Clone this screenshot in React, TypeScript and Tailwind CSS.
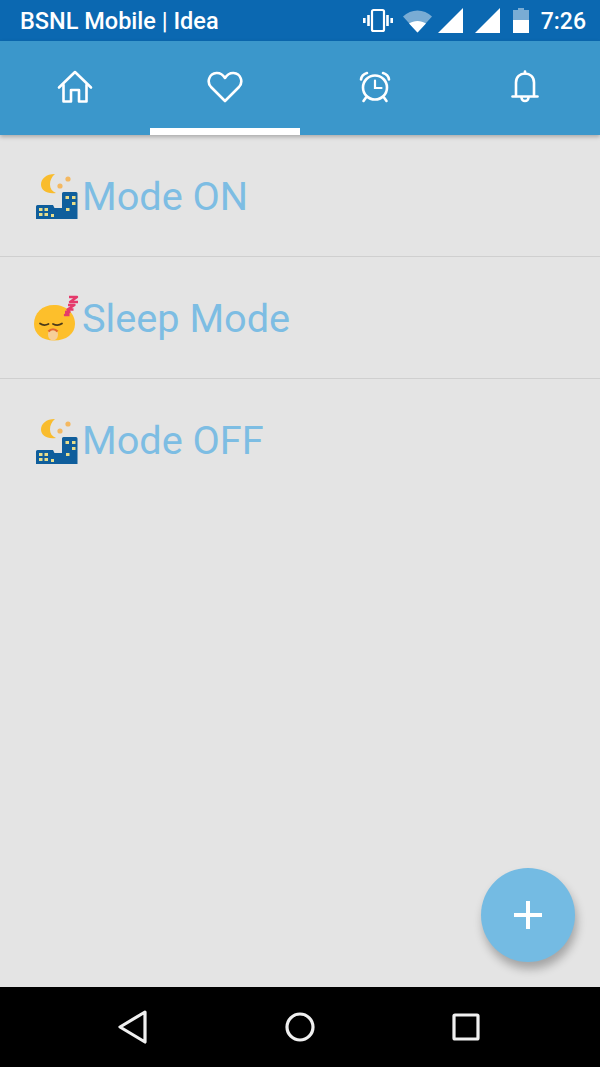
import React from "react";

function HomeIcon() {
  return (
    <svg width="36" height="34" viewBox="0 0 36 34" fill="none" stroke="white" strokeWidth="2.600" strokeLinejoin="round" strokeLinecap="round">
      <path d="M2 17.500 18 2l16 15.500" />
      <path d="M6.500 15v16.500h7.500V20h8v11.500h7.500V15" />
    </svg>
  );
}

function HeartIcon() {
  return (
    <svg width="36" height="32" viewBox="0 0 36 32" fill="none" stroke="white" strokeWidth="2.600" strokeLinejoin="round">
      <path d="M18 30 4 16C-.5 11 2 2.500 9.500 2c4-.2 6.500 1.800 8.500 5 2-3.200 4.500-5.200 8.500-5C34 2.500 36.500 11 32 16z" />
    </svg>
  );
}

function AlarmIcon() {
  return (
    <svg width="32" height="32" viewBox="0 0 32 32" fill="none" stroke="white" strokeWidth="2.600" strokeLinecap="round">
      <circle cx="16" cy="16.500" r="12" />
      <path d="M16 9.500V17h6.500" strokeWidth="2.200" />
      <path d="M2 8.500C2.500 5 4.500 3 8 2M30 8.500C29.500 5 27.500 3 24 2M7 26.500 4.500 30M25 26.500l2.500 3.500" />
    </svg>
  );
}

function BellIcon() {
  return (
    <svg width="28" height="34" viewBox="0 0 28 34" fill="none" stroke="white" strokeWidth="2.600" strokeLinejoin="round" strokeLinecap="round">
      <path d="M5 26V12.500C5 7 9 3.500 14 3.500S23 7 23 12.500V26" />
      <path d="M1.500 26.500h25" />
      <path d="M14 1.500v2" />
      <path d="M10.500 27.500a3.500 3.500 0 0 0 7 0" />
    </svg>
  );
}

function StatusIcons() {
  return (
    <div className="flex items-center">
      {/* vibrate */}
      <svg width="30" height="26" viewBox="0 0 30 26" fill="none" stroke="white" className="mr-[10px]">
        <rect x="9" y="2" width="12" height="21" rx="1.500" strokeWidth="2.200" />
        <path d="M5.500 7v11M24.500 7v11" strokeWidth="2.600" />
        <path d="M1.300 10v5M28.700 10v5" strokeWidth="2.600" />
      </svg>
      {/* wifi */}
      <svg width="29" height="24" viewBox="0 0 29 24" className="mr-[6px]">
        <path d="M0 7.500C8-.5 21-.5 29 7.500L14.500 23.500z" fill="white" fillOpacity="0.45" />
        <path d="M6 14.500c5-3.500 12-3.500 17 0L14.500 23.500z" fill="white" />
      </svg>
      {/* signal */}
      <svg width="26" height="25" viewBox="0 0 26 25" className="mr-[11px]">
        <path d="M0 25 25 0v25z" fill="white" />
      </svg>
      <svg width="26" height="25" viewBox="0 0 26 25" className="mr-[12px]">
        <path d="M0 25 25 0v25z" fill="white" />
      </svg>
      {/* battery */}
      <svg width="16" height="25" viewBox="0 0 16 25" className="mr-[12px]">
        <path d="M5 0h6v2h5v10H0V2h5z" fill="white" fillOpacity="0.45" />
        <rect y="12" width="16" height="13" fill="white" />
      </svg>
    </div>
  );
}

function CityEmoji() {
  return (
    <svg width="44" height="46" viewBox="0 0 44 46" className="mt-[1px] shrink-0">
      <path d="M21 1C12 1 7 6 7 11.500 7 17 13 21.500 22 20c-4-1.500-6-4.500-6-8.500C16 7.500 17.500 4 21 1z" fill="#f9bc2d" />
      <circle cx="34" cy="6" r="2.600" fill="#f4b860" />
      <circle cx="26" cy="13" r="2.600" fill="#f4b860" />
      <path d="M2 46V33.500Q2 32 3.500 32H19l1.500 3H28V20.500Q28 19 29.500 19H42Q43.500 19 43.500 20.500V46z" fill="#0f5e9c" />
      <g fill="#e8dd8a">
        <rect x="5" y="35" width="3.500" height="3" />
        <rect x="10.500" y="35" width="3.500" height="3" />
        <rect x="5" y="40" width="3.500" height="3" />
        <rect x="10.500" y="40" width="3.500" height="3" />
        <rect x="17" y="41" width="3" height="3" />
        <rect x="31.500" y="23" width="3.500" height="3" />
        <rect x="38" y="23" width="3.500" height="3" />
        <rect x="38" y="29" width="3.500" height="3" />
        <rect x="32" y="35" width="3.500" height="3" />
      </g>
    </svg>
  );
}

function SleepEmoji() {
  return (
    <svg width="48" height="47" viewBox="0 0 48 47" className="-ml-[2px] shrink-0">
      <path d="M2 30C2 19 10 11 22 11c12 0 21 8 21 19 0 10-9 16.500-21 16.500C10 46.500 2 40 2 30z" fill="#fdbf2b" />
      <path d="M8 29.500c2.500 1.800 5.500 2 8.500.5M21 30c3 1.500 6.500 1.300 9-.5" fill="none" stroke="#4a3a1a" strokeWidth="1.800" strokeLinecap="round" />
      <ellipse cx="21" cy="40.500" rx="5" ry="6" fill="#f6cf9a" />
      <path d="M16.500 37.500c2.500-3 6.500-3 9 0" fill="none" stroke="#e2672f" strokeWidth="2.200" />
      <path d="M37 3h8l-7 5h8M36 11h6.500l-7 4.500h6M33 18h4.500l-4.500 3h4.500" fill="none" stroke="#e53a6b" strokeWidth="2.400" strokeLinejoin="round" />
    </svg>
  );
}

function Row(props: { emoji: React.ReactNode; label: string; last?: boolean }) {
  return (
    <div className={"flex h-[122px] items-center pl-[34px] " + (props.last ? "" : "border-b border-[#cfcfcf]")}>
      <div className="flex w-[48px] shrink-0">{props.emoji}</div>
      <span className="pt-[2px] text-[39.700px] leading-none text-[#7dbde3]">{props.label}</span>
    </div>
  );
}

export default function App() {
  return (
    <div className="flex h-[1067px] w-[600px] flex-col overflow-hidden bg-[#e4e4e4] font-['Roboto',sans-serif]">
      <div className="flex h-[41px] shrink-0 items-center justify-between bg-[#0b68b1] pl-[20px] pr-[14px] text-white">
        <span className="pt-[2px] text-[23.500px] font-medium leading-none">BSNL Mobile | Idea</span>
        <div className="flex items-center">
          <StatusIcons />
          <span className="pt-[1px] text-[23px] font-medium leading-none">7:26</span>
        </div>
      </div>

      <div className="grid h-[94px] shrink-0 grid-cols-4 bg-[#3b97cb] shadow-[0_2px_4px_rgba(0,0,0,0.25)]">
        <div className="flex items-center justify-center pb-[7px] pt-[4px]"><HomeIcon /></div>
        <div className="flex items-center justify-center border-b-[7px] border-white pt-[4px]"><HeartIcon /></div>
        <div className="flex items-center justify-center pb-[7px] pt-[4px]"><AlarmIcon /></div>
        <div className="flex items-center justify-center pb-[7px] pt-[4px]"><BellIcon /></div>
      </div>

      <div className="relative flex-1">
        <Row emoji={<CityEmoji />} label="Mode ON" />
        <Row emoji={<SleepEmoji />} label="Sleep Mode" />
        <Row emoji={<CityEmoji />} label="Mode OFF" last />

        <button className="absolute bottom-[25px] right-[25px] flex h-[94px] w-[94px] items-center justify-center rounded-full bg-[#74bbe3] shadow-[2px_7px_10px_rgba(0,0,0,0.28)]">
          <svg width="30" height="30" viewBox="0 0 30 30" stroke="white" strokeWidth="4">
            <path d="M15 1v28M1 15h28" />
          </svg>
        </button>
      </div>

      <div className="flex h-[80px] shrink-0 items-center justify-center gap-[137px] bg-black pb-[1px] pr-[2px]">
        <svg width="30" height="34" viewBox="0 0 30 34" fill="none" stroke="#f0f0f0" strokeWidth="3.200" strokeLinejoin="round">
          <path d="M27 2 2 17l25 15z" />
        </svg>
        <svg width="30" height="30" viewBox="0 0 30 30" fill="none" stroke="#f0f0f0" strokeWidth="3.200">
          <circle cx="15" cy="15" r="13" />
        </svg>
        <svg width="28" height="28" viewBox="0 0 28 28" fill="none" stroke="#f0f0f0" strokeWidth="3.200" strokeLinejoin="round">
          <rect x="2" y="2" width="24" height="24" rx="1" />
        </svg>
      </div>
    </div>
  );
}
